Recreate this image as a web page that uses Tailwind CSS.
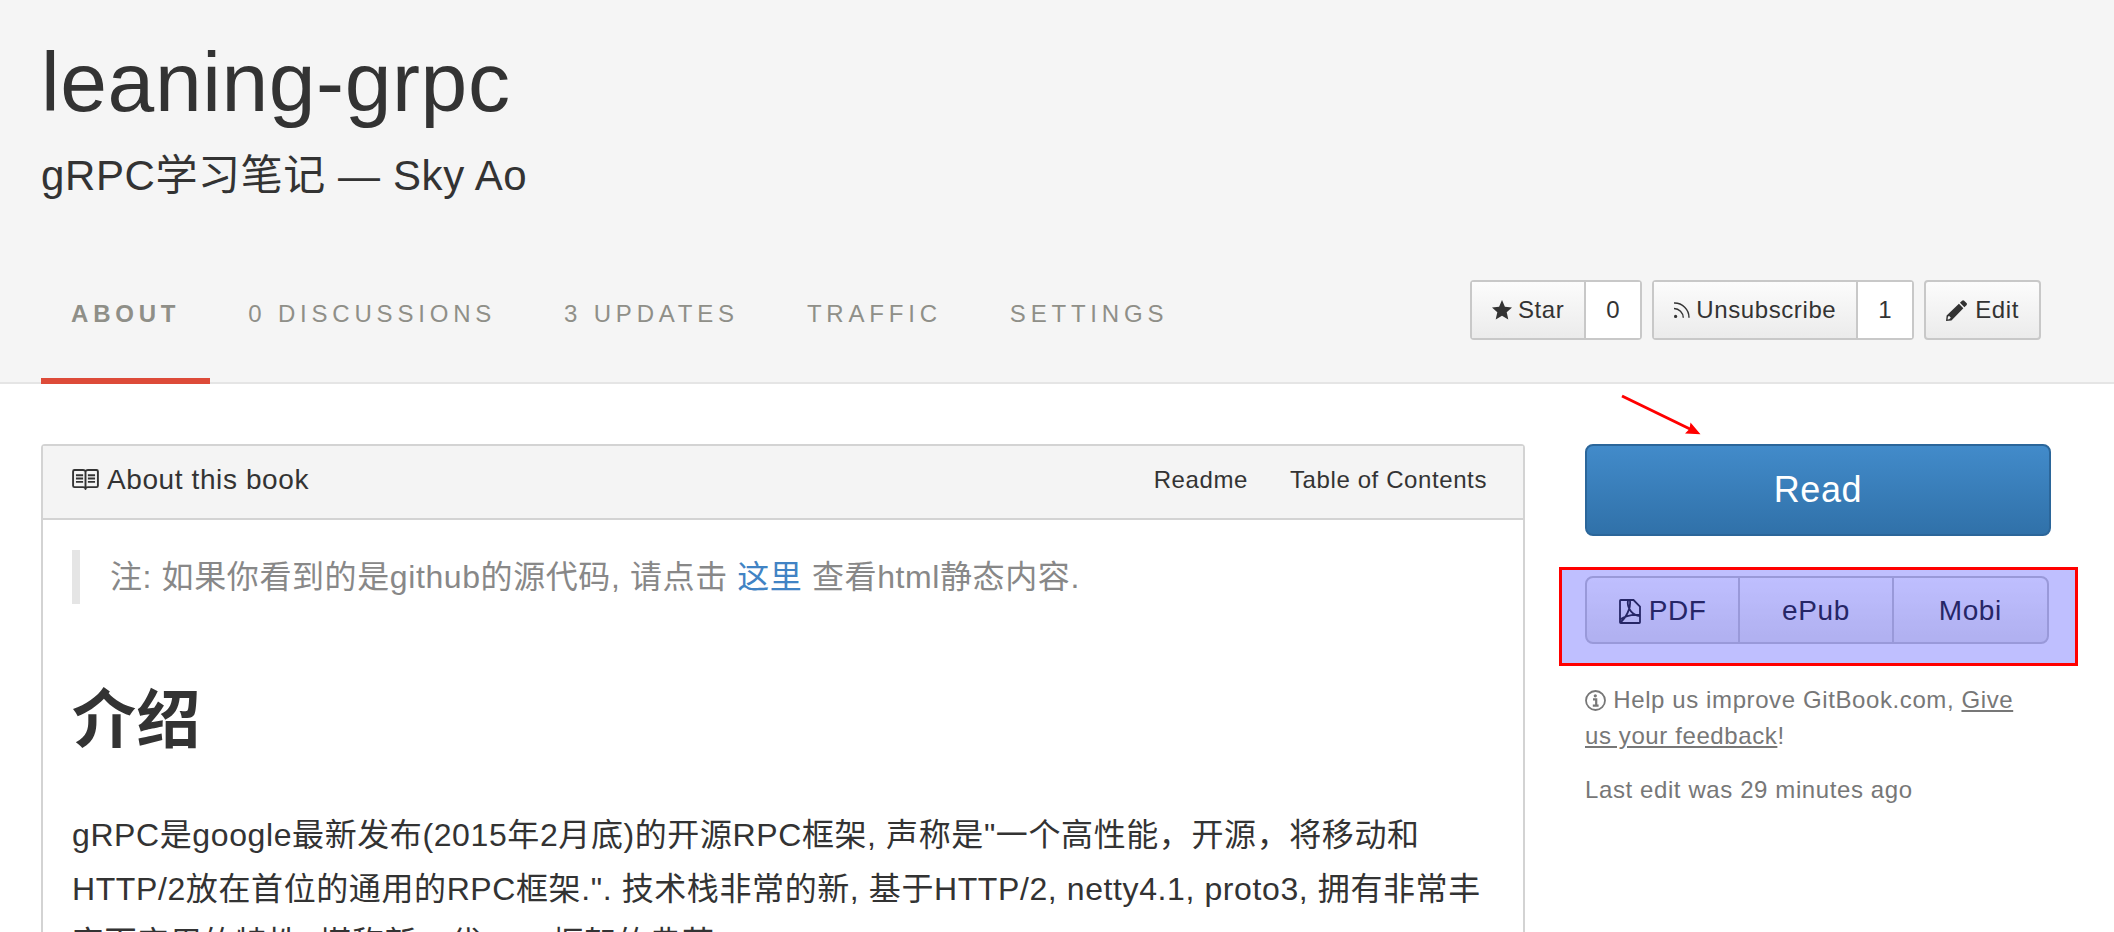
<!DOCTYPE html>
<html lang="zh-CN">
<head>
    <meta charset="UTF-8">
    <meta name="viewport" content="width=device-width, initial-scale=1.0">
    <title>leaning-grpc · GitBook</title>
    <script src="https://cdn.jsdelivr.net/npm/@tailwindcss/browser@4"></script>
</head>
<body class="h-screen overflow-hidden bg-white font-['Liberation_Sans','Noto_Sans_CJK_SC',sans-serif] text-2xl tracking-wide text-[#333]">

    <!-- Book header -->
    <header class="border-b-2 border-[#e5e5e5] bg-[#f5f5f5] px-[41px]">
        <h1 class="pt-8 text-[84px] leading-[100px]">leaning-grpc</h1>
        <h2 class="pt-4 text-[42px] leading-[56px]">gRPC学习笔记 — Sky Ao</h2>

        <div class="mt-[52px] flex items-start justify-between pr-8">
            <nav class="-mb-0.5 flex gap-2 tracking-[0.2em] text-[#8f8f88]">
                <a href="#" class="h-[128px] border-b-6 border-[#dd4b39] px-[30px] pt-[42px] font-bold">ABOUT</a>
                <a href="#" class="px-[30px] pt-[42px]">0 DISCUSSIONS</a>
                <a href="#" class="px-[30px] pt-[42px]">3 UPDATES</a>
                <a href="#" class="px-[30px] pt-[42px]">TRAFFIC</a>
                <a href="#" class="px-[30px] pt-[42px]">SETTINGS</a>
            </nav>

            <div class="mt-6 flex gap-2.5">
                <div class="flex h-[60px] rounded border-2 border-[#c8c8c8]">
                    <button class="flex items-center gap-1.5 border-r-2 border-[#c8c8c8] bg-linear-to-b from-[#fcfcfc] to-[#ebebeb] px-5">
                        <svg class="size-5" viewBox="0 0 20 20" fill="currentColor"><path d="M10 0l2.900 6.700 7.100.7-5.300 4.800L16.300 19.500 10 15.700 3.700 19.500l1.600-7.300L0 7.400l7.100-.7z"/></svg>
                        Star
                    </button>
                    <a href="#" class="flex items-center bg-white px-5">0</a>
                </div>
                <div class="flex h-[60px] rounded border-2 border-[#c8c8c8]">
                    <button class="flex items-center gap-1.5 border-r-2 border-[#c8c8c8] bg-linear-to-b from-[#fcfcfc] to-[#ebebeb] px-5">
                        <svg class="size-4" viewBox="0 0 16 16" fill="none" stroke="currentColor" stroke-width="1.400"><path d="M0 1a14.500 14.500 0 0 1 15 14.800M0 6.500a9.500 9.500 0 0 1 9.300 9.300"/><circle cx="1.600" cy="14.400" r="1.600" fill="currentColor" stroke="none"/></svg>
                        Unsubscribe
                    </button>
                    <a href="#" class="flex items-center bg-white px-5">1</a>
                </div>
                <button class="flex h-[60px] items-center gap-2 rounded border-2 border-[#c8c8c8] bg-linear-to-b from-[#fcfcfc] to-[#ebebeb] px-5">
                    <svg class="size-[21px]" viewBox="0 0 20 20" fill="currentColor"><path fill-rule="evenodd" d="M0 20l.6-5.200L12.300 3.600l4.200 4.200L5.200 19.500zM1.900 15.600l-.4 2.900 1.500-.2 1.600-1.500-1.500-1.600z"/><path d="M13.300 2.700L15.300.7q1-1 2 0l2.200 2.200q1 1 0 2l-2 2z"/></svg>
                    Edit
                </button>
            </div>
        </div>
    </header>

    <main class="grid grid-cols-[minmax(0,1fr)_466px] items-start gap-[60px] pt-[60px] pr-[63px] pl-[41px]">

        <!-- About panel -->
        <section class="rounded border-2 border-[#d3d3d3]">
            <div class="flex h-[74px] items-center justify-between border-b-2 border-[#d3d3d3] bg-[#f4f4f4] pr-9 pb-1 pl-[29px]">
                <h3 class="flex items-center gap-2 text-[28px]">
                    <svg class="h-[21px] w-[27px]" viewBox="0 0 28 22" fill="none" stroke="currentColor" stroke-width="2"><path d="M14 2.500C13.500 1.500 12.800 1 11.500 1H2.500Q1 1 1 2.500v15Q1 19 2.500 19h9c1.300 0 2 .4 2.500 1.400.5-1 1.200-1.400 2.500-1.400h9q1.500 0 1.500-1.500v-15Q27 1 25.500 1h-9C15.200 1 14.500 1.500 14 2.500zV21.500M4 6.500h7.500M4 10h7.500M4 13.500h7.500M16.500 6.500H24M16.500 10H24M16.500 13.500H24"/></svg>
                    About this book
                </h3>
                <div class="flex gap-[42px]">
                    <a href="#">Readme</a>
                    <a href="#">Table of Contents</a>
                </div>
            </div>

            <article class="px-[29px] pt-[30px] text-[32px] leading-[54px]">
                <blockquote class="border-l-8 border-[#e5e5e5] pl-[30px] text-[#888]">
                    注: 如果你看到的是github的源代码, 请点击 <a href="#" class="text-[#4183c4]">这里</a> 查看html静态内容.
                </blockquote>
                <h1 class="mt-[71px] text-[64px] leading-[90px] font-bold">介绍</h1>
                <p class="mt-[43px]">gRPC是google最新发布(2015年2月底)的开源RPC框架, 声称是"一个高性能，开源，将移动和HTTP/2放在首位的通用的RPC框架.". 技术栈非常的新, 基于HTTP/2, netty4.1, proto3, 拥有非常丰富而实用的特性, 堪称新一代RPC框架的典范.</p>
            </article>
        </section>

        <!-- Sidebar -->
        <aside class="relative">
            <a href="#" class="flex h-[92px] items-center justify-center rounded-lg border-2 border-[#2b669a] bg-linear-to-b from-[#428bca] to-[#3071a9] text-4xl text-white">Read</a>

            <div class="mt-10 mr-0.5 grid h-[68px] grid-cols-3 divide-x-2 divide-[#ccc] rounded-lg border-2 border-[#ccc] bg-linear-to-b from-white to-[#ebebeb] text-[28px]">
                <a href="#" class="flex items-center justify-center gap-2 pt-0.5">
                    <svg class="h-[25px] w-[22px]" viewBox="0 0 22 25" fill="none" stroke="currentColor" stroke-width="1.800"><path d="M1.800 1H14.500L21 7.500V23.200Q21 24 20.200 24H1.800Q1 24 1 23.200V1.800Q1 1 1.800 1z"/><path d="M9 1c-.8 4 .2 8 3 11.300 2.200 2.700 5.200 4.400 9 4.700M11 1c.5 4.500-.2 8.500-2.500 13C6.500 18 4 21.500 1 23.500M1 20.500c5-3.500 12-5.300 20-4.500"/></svg>
                    PDF
                </a>
                <a href="#" class="flex items-center justify-center pt-0.5">ePub</a>
                <a href="#" class="flex items-center justify-center pt-0.5">Mobi</a>
            </div>

            <p class="mt-[38px] pr-6 leading-9 text-[#777]">
                <svg class="inline size-[21px] align-[-3px]" viewBox="0 0 21 21" fill="none" stroke="currentColor" stroke-width="1.800"><circle cx="10.500" cy="10.500" r="9.500"/><path d="M8 9.300h3.200v6M7.800 15.600h5.800" stroke-width="2.200"/><circle cx="10.300" cy="5.800" r="1.600" fill="currentColor" stroke="none"/></svg>
                Help us improve GitBook.com, <a href="#" class="underline">Give us your feedback</a>!
            </p>
            <p class="mt-[18px] leading-9 text-[#777]">Last edit was 29 minutes ago</p>

            <!-- Annotations: arrow to the Read button, box over the downloads -->
            <svg class="pointer-events-none absolute -top-[50px] left-9 h-[42px] w-20" viewBox="0 0 80 42"><path d="M1 2L70 35.500" stroke="#f00" stroke-width="3" fill="none"/><path d="M79.500 40.300L64 39.500 68.500 35 69.500 28.500z" fill="#f00"/></svg>
            <div class="pointer-events-none absolute top-[123px] -right-[27px] -left-[26px] h-[99px] border-3 border-[#f00] bg-[#00f]/25"></div>
        </aside>
    </main>

</body>
</html>
